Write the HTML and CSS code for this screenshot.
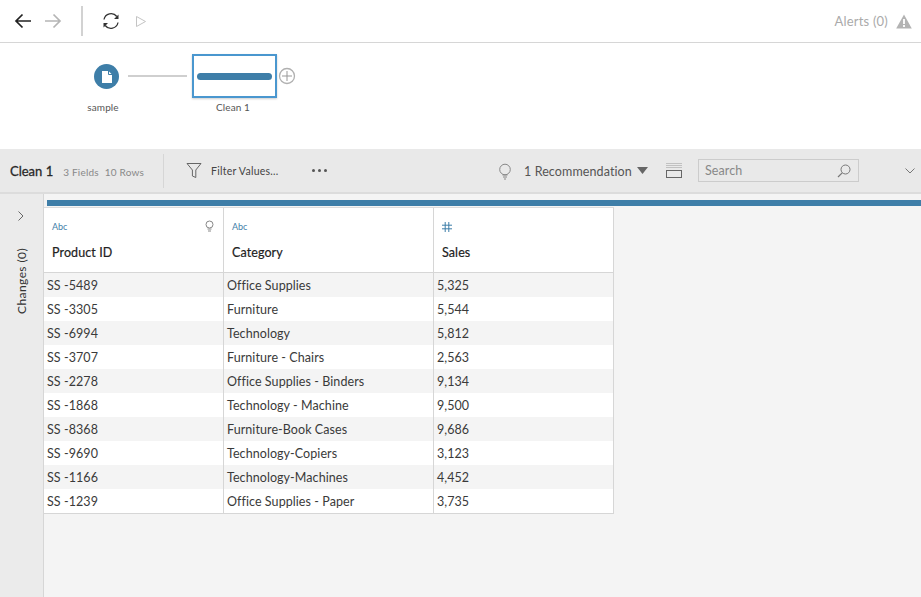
FILE: index.html
```html
<!DOCTYPE html>
<html lang="en">
<head>
<meta charset="utf-8">
<title>Clean 1</title>
<link rel="stylesheet" href="styles.css">
</head>
<body>
<div class="app">
  <header class="topbar">
    <svg class="ic-back" width="18" height="16" viewBox="0 0 18 16"><path d="M17 8H2M8.500 1.500 2 8l6.500 6.500" fill="none" stroke="#222" stroke-width="1.700"/></svg>
    <svg class="ic-fwd" width="18" height="16" viewBox="0 0 18 16"><path d="M1 8h15M9.500 1.500 16 8l-6.500 6.500" fill="none" stroke="#b5b5b5" stroke-width="1.700"/></svg>
    <span class="top-sep"></span>
    <svg class="ic-refresh" width="18" height="18" viewBox="0 0 18 18"><path d="M2 7.500A7.200 7.200 0 0 1 14.800 4.500M16 10.500A7.200 7.200 0 0 1 3.200 13.500" fill="none" stroke="#333" stroke-width="1.300"/><path d="M16.500 2.500v4.500h-4.500zM1.500 15.500V11H6z" fill="#333"/></svg>
    <svg class="ic-run" width="12" height="13" viewBox="0 0 12 13"><path d="M1.500 1.500 10.500 6.500l-9 5z" fill="none" stroke="#c4c4c4"/></svg>
    <span class="alerts">Alerts (0)</span>
    <svg class="ic-alert" width="16" height="15" viewBox="0 0 16 15"><path d="M8 .5 15.800 14.500H.2z" fill="#b3b3b3"/><path d="M7.100 5h1.800v5H7.100zM7.100 11h1.800v2H7.100z" fill="#fff"/></svg>
  </header>

  <section class="canvas">
    <div class="node-source"><svg width="12" height="14" viewBox="0 0 12 14"><path d="M1 1h6.500L11 4.500V13H1z" fill="#fff"/><path d="M7.500 1v3.500H11" fill="none" stroke="#3e7ea8"/></svg></div>
    <span class="node-label label-sample">sample</span>
    <span class="link"></span>
    <div class="node-clean"><span class="clean-bar"></span></div>
    <span class="node-label label-clean">Clean 1</span>
    <svg class="node-add" width="18" height="18" viewBox="0 0 18 18"><circle cx="9" cy="9" r="7.500" fill="#fff" stroke="#b0b0b0" stroke-width="1.300"/><path d="M9 4v10M4 9h10" stroke="#999" stroke-width="1"/></svg>
  </section>

  <section class="toolbar">
    <div class="tb-title"><strong>Clean 1</strong><span class="tb-meta">3 Fields</span><span class="tb-meta">10 Rows</span></div>
    <span class="tb-sep"></span>
    <svg class="ic-filter" width="16" height="17" viewBox="0 0 16 17"><path d="M1 1.500h14L9.800 8v7.500l-3.400-1.500V8z" fill="none" stroke="#666" stroke-width="1"/></svg>
    <span class="tb-filter">Filter Values...</span>
    <span class="tb-more"><i></i><i></i><i></i></span>
    <svg class="ic-bulb" width="14" height="18" viewBox="0 0 14 18"><circle cx="7" cy="6.500" r="5.300" fill="none" stroke="#888"/><path d="M4.500 12h5M5 14h4M6 16h2" stroke="#888"/></svg>
    <span class="tb-rec">1 Recommendation</span>
    <svg class="ic-caret" width="11" height="7" viewBox="0 0 11 7"><path d="M0 0h11L5.500 7z" fill="#666"/></svg>
    <svg class="ic-grid" width="16" height="15" viewBox="0 0 16 15"><path d="M.5 .5h15M.5 2.500h15M.5 4.500h15" stroke="#999" stroke-dasharray="1 1"/><rect x=".5" y="7.500" width="15" height="7" fill="none" stroke="#666"/></svg>
    <div class="search"><span>Search</span><svg width="14" height="14" viewBox="0 0 14 14"><circle cx="8.500" cy="5.500" r="4.500" fill="none" stroke="#777"/><path d="M5.200 8.800 1 13" stroke="#777" stroke-width="1.200"/></svg></div>
    <svg class="ic-chev" width="10" height="6" viewBox="0 0 10 6"><path d="M.5.500 5 5 9.500.5" fill="none" stroke="#777"/></svg>
  </section>

  <section class="workspace">
    <aside class="changes">
      <svg width="6" height="10" viewBox="0 0 6 10"><path d="M.5.500 5 5 .5 9.500" fill="none" stroke="#666"/></svg>
      <span class="changes-label">Changes (0)</span>
    </aside>
    <main class="content">
      <div class="profile-bar"></div>
      <div class="table">
        <div class="head-row">
          <div class="th">
            <div class="type abc">Abc<svg class="col-bulb" width="9" height="13" viewBox="0 0 9 13"><circle cx="4.500" cy="4.500" r="3.500" fill="none" stroke="#888"/><path d="M2.500 9h4M3 11h3" stroke="#888"/></svg></div>
            <div class="name">Product ID</div>
          </div>
          <div class="th">
            <div class="type abc">Abc</div>
            <div class="name">Category</div>
          </div>
          <div class="th">
            <div class="type"><svg width="10" height="10" viewBox="0 0 10 10"><path d="M3.200 0v10M6.800 0v10M0 3.200h10M0 6.800h10" stroke="#3e7ea8"/></svg></div>
            <div class="name">Sales</div>
          </div>
        </div>
        <div class="row"><span>SS -5489</span><span>Office Supplies</span><span>5,325</span></div>
        <div class="row"><span>SS -3305</span><span>Furniture</span><span>5,544</span></div>
        <div class="row"><span>SS -6994</span><span>Technology</span><span>5,812</span></div>
        <div class="row"><span>SS -3707</span><span>Furniture - Chairs</span><span>2,563</span></div>
        <div class="row"><span>SS -2278</span><span>Office Supplies - Binders</span><span>9,134</span></div>
        <div class="row"><span>SS -1868</span><span>Technology - Machine</span><span>9,500</span></div>
        <div class="row"><span>SS -8368</span><span>Furniture-Book Cases</span><span>9,686</span></div>
        <div class="row"><span>SS -9690</span><span>Technology-Copiers</span><span>3,123</span></div>
        <div class="row"><span>SS -1166</span><span>Technology-Machines</span><span>4,452</span></div>
        <div class="row"><span>SS -1239</span><span>Office Supplies - Paper</span><span>3,735</span></div>
      </div>
    </main>
  </section>
</div>
</body>
</html>
```

FILE: styles.css
```css
* { box-sizing: border-box; }
html, body { margin: 0; padding: 0; }
body { font-family: Lato, "Open Sans", sans-serif; color: #333; background: #fff; overflow: hidden; }
.app { width: 921px; height: 597px; display: flex; flex-direction: column; }

.topbar { height: 43px; display: flex; align-items: center; border-bottom: 1px solid #d6d6d6; background: #fff; padding-left: 14px; flex: none; }
.ic-fwd { margin-left: 12px; }
.top-sep { width: 2px; height: 30px; background: #d2d2d2; margin-left: 19px; }
.ic-refresh { margin-left: 19px; }
.ic-run { margin-left: 15px; }
.alerts { margin-left: auto; font-size: 13px; letter-spacing: .2px; color: #aaa; }
.ic-alert { margin-left: 8px; margin-right: 9px; }

.canvas { position: relative; height: 106px; background: #fff; flex: none; }
.node-source { position: absolute; left: 94px; top: 21px; width: 25px; height: 25px; border-radius: 50%; background: #3e7ea8; display: flex; align-items: center; justify-content: center; }
.link { position: absolute; left: 128px; top: 32px; width: 59px; height: 2px; background: #cfcfcf; }
.node-clean { position: absolute; left: 192px; top: 11px; width: 85px; height: 44px; border: 2px solid #4a97cf; background: #fff; display: flex; align-items: center; justify-content: center; box-shadow: 0 1px 2px rgba(0,0,0,.2); }
.clean-bar { width: 75px; height: 7px; border-radius: 4px; background: #3e7ea8; }
.node-add { position: absolute; left: 278px; top: 24px; }
.node-label { position: absolute; font-size: 10px; letter-spacing: .1px; color: #555; width: 60px; text-align: center; top: 58px; }
.label-sample { left: 73px; }
.label-clean { left: 203px; }

.toolbar { height: 45px; background: #e9e9e9; border-bottom: 2px solid #dcdcdc; display: flex; align-items: center; flex: none; padding-left: 10px; }
.tb-title { display: flex; align-items: baseline; width: 143px; }
.tb-title strong { font-size: 13px; font-weight: 400; -webkit-text-stroke: .3px #333; color: #222; margin-right: 10px; }
.tb-meta { font-size: 10px; letter-spacing: .2px; color: #888; margin-right: 6px; }
.tb-sep { width: 1px; height: 34px; background: #d6d6d6; margin-left: 10px; }
.ic-filter { margin-left: 22px; }
.tb-filter { margin-left: 9px; font-size: 10.500px; letter-spacing: .25px; color: #444; width: 70px; white-space: nowrap; }
.tb-more { display: flex; gap: 3px; margin-left: 31px; }
.tb-more i { width: 3px; height: 3px; border-radius: 50%; background: #555; }
.ic-bulb { margin-left: 171px; margin-top: 2px; }
.tb-rec { margin-left: 12px; margin-top: 2px; font-size: 12.500px; letter-spacing: .1px; color: #555; width: 110px; white-space: nowrap; }
.ic-caret { margin-left: 3px; }
.ic-grid { margin-left: 18px; }
.search { margin-left: 16px; width: 161px; height: 23px; border: 1px solid #ccc; display: flex; align-items: center; justify-content: space-between; padding: 0 7px 0 6px; font-size: 12.500px; letter-spacing: .1px; color: #888; }
.ic-chev { margin-left: 46px; }

.workspace { flex: 1; display: flex; min-height: 0; }
.changes { width: 44px; background: #ebebeb; border-right: 1px solid #d6d6d6; display: flex; flex-direction: column; align-items: center; padding-top: 17px; padding-right: 1px; flex: none; }
.changes-label { writing-mode: vertical-rl; transform: rotate(180deg); font-size: 12px; letter-spacing: .4px; color: #333; margin-top: 27px; }
.content { flex: 1; background: #f4f4f4; padding-top: 6px; min-width: 0; }
.profile-bar { height: 6px; background: #3e7ea8; margin-left: 3px; }
.table { width: 570px; margin-top: 1px; border-bottom: 1px solid #d6d6d6; border-top: 1px solid #dcdcdc; }
.head-row { display: grid; grid-template-columns: 180px 210px 180px; height: 65px; background: #fff; border-bottom: 1px solid #d6d6d6; }
.th { padding: 11px 8px 0 8px; border-right: 1px solid #d6d6d6; }
.type { height: 15px; font-size: 9px; color: #3e7ea8; display: flex; align-items: center; justify-content: space-between; }
.col-bulb { margin-right: 1px; }
.name { margin-top: 11px; font-size: 12.500px; letter-spacing: .1px; color: #222; -webkit-text-stroke: .2px #222; }
.row { display: grid; grid-template-columns: 180px 210px 180px; height: 24px; background: #fff; font-size: 12.500px; letter-spacing: .07px; color: #3a3a3a; }
.row:nth-child(even) { background: #f4f4f4; }
.row span { border-right: 1px solid #d6d6d6; padding-left: 3px; line-height: 25px; white-space: nowrap; }
```
